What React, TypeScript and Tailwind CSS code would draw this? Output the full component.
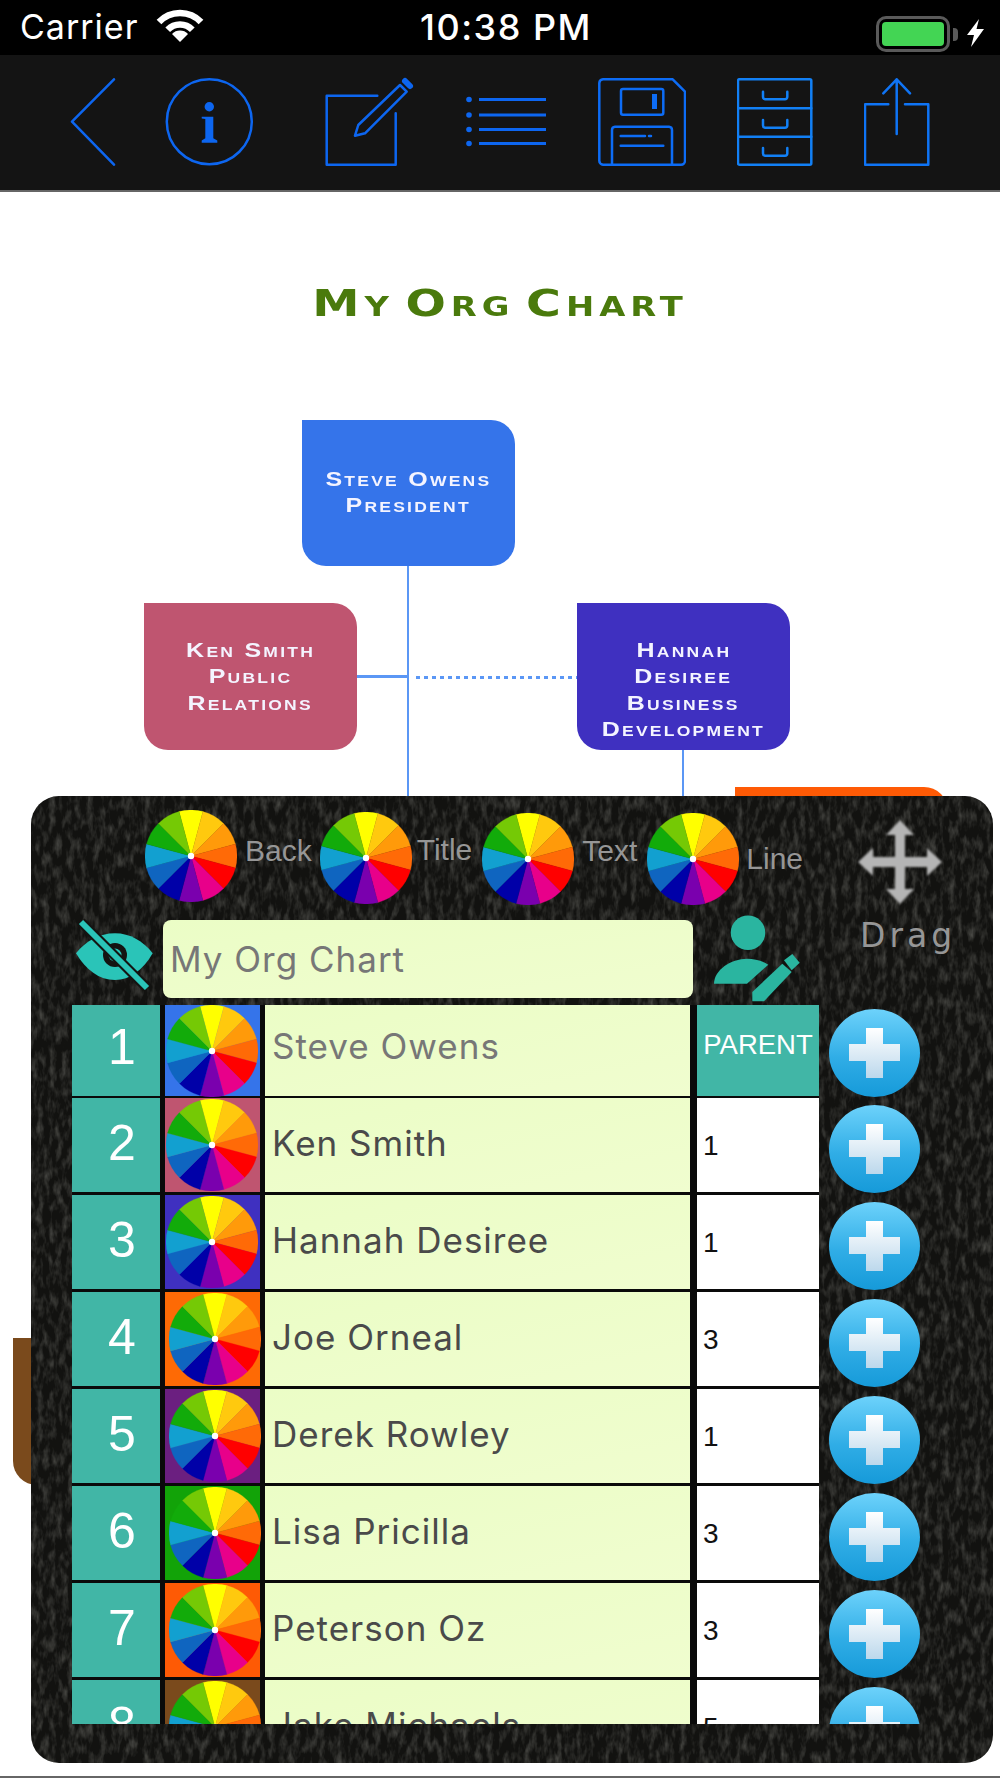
import React from 'react';

const WHEEL_COLORS = [
  '#ffff00', '#ffc90e', '#ff9a0a', '#ff6a07', '#ff0000', '#e8008a',
  '#7a00ae', '#0000a8', '#0f65c0', '#12a0d0', '#12ab0a', '#75c905',
];

const BLUE = '#0d66f0';

const Wheel = ({ className = '' }: { className?: string }) => (
  <svg viewBox="-46 -46 92 92" className={`w-[92px] h-[92px] shrink-0 ${className}`}>
    {WHEEL_COLORS.map((color, i) => {
      const a0 = ((i * 30 - 105) * Math.PI) / 180;
      const a1 = ((i * 30 - 75) * Math.PI) / 180;
      return (
        <path
          key={color}
          d={`M0 0L${46 * Math.cos(a0)} ${46 * Math.sin(a0)}A46 46 0 0 1 ${46 * Math.cos(a1)} ${46 * Math.sin(a1)}Z`}
          fill={color}
          stroke={color}
          strokeWidth="0.3"
        />
      );
    })}
    <circle r="3.2" fill="#fff" />
  </svg>
);

const PlusButton = () => (
  <svg viewBox="0 0 91 88" className="w-[91px] h-[88px]">
    <defs>
      <linearGradient id="plusBg" x1="0" y1="0" x2="0" y2="1">
        <stop offset="0" stopColor="#6dd2fb" />
        <stop offset="0.55" stopColor="#30ade6" />
        <stop offset="1" stopColor="#169ad9" />
      </linearGradient>
      <linearGradient id="plusCross" x1="0" y1="0" x2="0" y2="1">
        <stop offset="0" stopColor="#ffffff" />
        <stop offset="1" stopColor="#bcd8ec" />
      </linearGradient>
    </defs>
    <ellipse cx="45.5" cy="44" rx="45.5" ry="44" fill="url(#plusBg)" />
    <path d="M37 19h17v16h17v17H54v17H37V52H20V35h17z" fill="url(#plusCross)" />
  </svg>
);

const rows = [
  { n: 1, name: 'Steve Owens', parent: 'PARENT', bg: 'bg-[#3574ea]' },
  { n: 2, name: 'Ken Smith', parent: '1', bg: 'bg-[#bf5570]' },
  { n: 3, name: 'Hannah Desiree', parent: '1', bg: 'bg-[#3f30c0]' },
  { n: 4, name: 'Joe Orneal', parent: '3', bg: 'bg-[#fe6a05]' },
  { n: 5, name: 'Derek Rowley', parent: '1', bg: 'bg-[#6b1f80]' },
  { n: 6, name: 'Lisa Pricilla', parent: '3', bg: 'bg-[#12a308]' },
  { n: 7, name: 'Peterson Oz', parent: '3', bg: 'bg-[#fe5a05]' },
  { n: 8, name: 'Jake Michaels', parent: '5', bg: 'bg-[#7a4a1c]' },
];

const Row = ({ n, name, parent, bg }: (typeof rows)[number]) => {
  const first = n === 1;
  return (
    <div className={`flex shrink-0 ${first ? 'h-[93px]' : 'h-[97px]'}`}>
      <div className={`flex gap-[5px] bg-[#0a0a0a] w-[747px] ${first ? 'pb-[2px]' : 'pb-[3px]'}`}>
        <div className="w-[88px] bg-[#41b6a6] flex justify-center pl-[12px]">
          <span className={`font-['Liberation_Sans',sans-serif] text-[50px] leading-[50px] text-white ${first ? 'mt-[17px]' : 'mt-[20px]'}`}>{n}</span>
        </div>
        <div className={`w-[95px] flex items-center ${n < 4 ? 'pl-[1px]' : 'pl-[4px]'} ${bg}`}>
          <Wheel className={n < 4 ? '' : 'mt-[-1px]'} />
        </div>
        <div className="w-[425px] mr-[2px] bg-gradient-to-br from-[#ebfdc6] to-[#f0fdcf] pl-[7px] flex">
          <span className={`font-['Inter',sans-serif] text-[35px] leading-[40px] tracking-[1px] ${first ? 'text-[#777] mt-[21px]' : 'text-[#4a4a4a] mt-[25px]'}`}>{name}</span>
        </div>
        <div className={`w-[122px] flex ${first ? 'bg-[#41b6a6] justify-center' : 'bg-white pl-[6px]'}`}>
          <span className={`font-['Liberation_Sans',sans-serif] ${first ? 'text-[27.500px] text-white leading-[30px] mt-[25px]' : 'text-[28px] text-[#111] leading-[30px] mt-[33px]'}`}>{parent}</span>
        </div>
      </div>
      <div className={`ml-[10px] ${first ? 'pt-[4px]' : 'pt-[7px]'}`}>
        <PlusButton />
      </div>
    </div>
  );
};

const labelClass = "font-['Liberation_Sans',sans-serif] text-[30px] leading-[30px] text-[#969696]";

const App = () => (
  <div className="relative w-[1000px] h-[1778px] overflow-hidden bg-white flex flex-col font-['Liberation_Sans',sans-serif]">
    {/* status bar */}
    <div className="h-[55px] shrink-0 bg-black relative flex items-center text-white font-['Inter',sans-serif]">
      <span className="ml-[20px] text-[34px] leading-[40px] tracking-[1px] mt-[-1px]">Carrier</span>
      <svg viewBox="0 0 48 36" className="w-[48px] h-[36px] ml-[18px] mt-[-4px]" fill="none" stroke="#fff" strokeWidth="6.500">
        <path d="M3 14A29 29 0 0 1 45 14" />
        <path d="M11.700 21.700A17 17 0 0 1 36.300 21.700" />
        <path d="M24 34L16 26A11 11 0 0 1 32 26Z" fill="#fff" stroke="none" />
      </svg>
      <span className="absolute left-[420px] text-[36px] leading-[40px] font-medium tracking-[1.500px] mt-[-1px]">10:38 PM</span>
      <div className="absolute left-[876px] top-[16px] w-[74px] h-[36px] rounded-[10px] border-[3px] border-[#5a5a5a] p-[3px]">
        <div className="w-full h-full bg-[#43d554] rounded-[4px]" />
      </div>
      <div className="absolute left-[953px] top-[28px] w-[5px] h-[13px] bg-[#5a5a5a] rounded-r-[4px]" />
      <svg viewBox="0 0 17 28" className="absolute left-[967px] top-[19px] w-[17px] h-[28px]" fill="#fff">
        <path d="M12 0L0 16H7L4 28L17 10H9.500Z" />
      </svg>
    </div>

    {/* toolbar */}
    <div className="h-[137px] shrink-0 bg-[#141414] border-b-[2px] border-[#666] flex items-start pt-[21px]">
      <svg viewBox="0 0 46 88" className="w-[46px] h-[88px] ml-[70px] mt-[2px]" fill="none" stroke={BLUE} strokeWidth="2.500" strokeLinecap="round" strokeLinejoin="round">
        <path d="M44 1.300L2 43.700L44 86.700" />
      </svg>
      <svg viewBox="0 0 92 92" className="w-[92px] h-[92px] ml-[48px]" fill="none">
        <circle cx="45.300" cy="45.700" r="42.500" stroke={BLUE} strokeWidth="2.500" />
        <circle cx="45.300" cy="30.700" r="4.700" fill={BLUE} />
        <path d="M37.700 40.700H49.300V62.300L53.300 64.500V66.700H37.700V64.500L41.300 62.300V43L37.700 42.500Z" fill={BLUE} />
      </svg>
      <svg viewBox="0 0 92 92" className="w-[92px] h-[92px] ml-[68px]" fill="none" stroke={BLUE} strokeWidth="2.500" strokeLinecap="round" strokeLinejoin="round">
        <path d="M53.300 19.700H2.700V88.700H71.700V37.300" />
        <path d="M31 59.700L34.300 49L76 9L82.700 15.700L41 57.300Z" />
        <path d="M81 5L86 10" strokeWidth="6" />
      </svg>
      <svg viewBox="0 0 84 60" className="w-[84px] h-[60px] ml-[48px] mt-[14px]" fill="none" stroke={BLUE} strokeWidth="3">
        <path d="M15 9.500H82M15 25H82M15 39.500H82M15 53.500H82" />
        <g fill={BLUE} stroke="none">
          <circle cx="5" cy="9.500" r="2.800" />
          <circle cx="5" cy="25" r="2.800" />
          <circle cx="5" cy="39.500" r="2.800" />
          <circle cx="5" cy="53.500" r="2.800" />
        </g>
      </svg>
      <svg viewBox="0 0 88 88" className="w-[88px] h-[88px] ml-[50px] mt-[2px]" fill="none" stroke="#0d6cf5" strokeWidth="2.500" strokeLinejoin="round" strokeLinecap="round">
        <path d="M5 1.300H74.700L87 13.700V82.700A4 4 0 0 1 83 86.700H5A4 4 0 0 1 1.300 82.700V5A4 4 0 0 1 5 1.300Z" />
        <rect x="23" y="11" width="42.300" height="25.700" rx="2" />
        <path d="M56.500 16V31" strokeWidth="5" strokeLinecap="butt" />
        <path d="M14 86.700V52A3.300 3.300 0 0 1 17 48.700H71A3.300 3.300 0 0 1 74 52V86.700" />
        <path d="M22.700 58H47M51 58H53M22.700 67.700H65.300" />
      </svg>
      <svg viewBox="0 0 76 88" className="w-[76px] h-[88px] ml-[51px] mt-[2px]" fill="none" stroke="#1280f5" strokeWidth="2.500" strokeLinejoin="round" strokeLinecap="round">
        <rect x="1" y="1.300" width="73.300" height="85.400" rx="1.500" />
        <path d="M1 30.300H74.300M1 58.700H74.300" />
        <path d="M26 13.700V19A2.300 2.300 0 0 0 28 21.300H48A2.300 2.300 0 0 0 50.300 19V13.700" />
        <path d="M26 42V47.500A2.300 2.300 0 0 0 28 49.700H48A2.300 2.300 0 0 0 50.300 47.500V42" />
        <path d="M26 70V75.500A2.300 2.300 0 0 0 28 77.700H48A2.300 2.300 0 0 0 50.300 75.500V70" />
      </svg>
      <svg viewBox="0 0 66 88" className="w-[66px] h-[88px] ml-[51px] mt-[2px]" fill="none" stroke="#0f74f5" strokeWidth="2.500" strokeLinejoin="round" strokeLinecap="round">
        <path d="M24.300 26.300H1V86.700H64.300V26.300H41" />
        <path d="M32.700 56V1.300M19.300 15.300L32.700 1.300L46 15.300" />
      </svg>
    </div>

    {/* chart canvas */}
    <div className="relative flex-1">
      <h1 className="mt-[89px] text-center font-['DejaVu_Sans',sans-serif] font-bold [font-variant:small-caps] text-[38px] leading-[44px] tracking-[4px] [word-spacing:-8px] text-[#4a7a0c] scale-x-[1.25]">My Org Chart</h1>

      <div className="absolute left-[407px] top-[374px] w-[2px] h-[230px] bg-[#5b97f5]" />
      <div className="absolute left-[357px] top-[483px] w-[51px] h-[3px] bg-[#5b97f5]" />
      <div className="absolute left-[416px] top-[484px] w-[161px] h-[3px] bg-[repeating-linear-gradient(90deg,#5b97f5_0_4px,transparent_4px_8px)]" />
      <div className="absolute left-[682px] top-[558px] w-[2px] h-[46px] bg-[#5b97f5]" />

      <Node className="left-[302px] top-[228px] h-[146px] pb-[2px] bg-[#3574ea]" lines={['Steve Owens', 'President']} />
      <Node className="left-[144px] top-[411px] h-[147px] bg-[#bf5570]" lines={['Ken Smith', 'Public', 'Relations']} />
      <Node className="left-[577px] top-[411px] h-[147px] pt-[26px] bg-[#3f30c0]" lines={['Hannah', 'Desiree', 'Business', 'Development']} />
      <div className="absolute left-[735px] top-[595px] w-[213px] h-[147px] rounded-tr-[24px] bg-[#fe5a05]" />
      <div className="absolute left-[13px] top-[1146px] w-[213px] h-[147px] rounded-bl-[24px] bg-[#7a4a1c]" />
    </div>
    <div className="h-[2px] shrink-0 bg-[#666]" />

    {/* floating panel */}
    <div className="absolute left-[31px] top-[796px] w-[962px] h-[967px] rounded-[28px] bg-[#121210] overflow-hidden">
      <svg className="absolute inset-0 w-full h-full">
        <filter id="leather">
          <feTurbulence type="fractalNoise" baseFrequency="0.16 0.07" numOctaves="3" seed="4" />
          <feColorMatrix values="0 0 0 0 0.2 0 0 0 0 0.2 0 0 0 0 0.18 1 0 0 0 -0.420" />
        </filter>
        <rect width="100%" height="100%" filter="url(#leather)" />
      </svg>

      <div className="relative flex">
        <div className="w-[820px]">
          {/* colour pickers */}
          <div className="h-[117px] flex items-start">
            <Wheel className="ml-[114px] mt-[14px]" />
            <span className={`${labelClass} ml-[8px] mt-[40px]`}>Back</span>
            <Wheel className="ml-[8px] mt-[16px]" />
            <span className={`${labelClass} ml-[5px] mt-[39px]`}>Title</span>
            <Wheel className="ml-[10px] mt-[17px]" />
            <span className={`${labelClass} ml-[8px] mt-[40px]`}>Text</span>
            <Wheel className="ml-[10px] mt-[17px]" />
            <span className={`${labelClass} ml-[7px] mt-[48px]`}>Line</span>
          </div>
          {/* title row */}
          <div className="h-[92px] flex items-start">
            <svg viewBox="0 0 84 78" className="w-[84px] h-[78px] ml-[41px] mt-[3px]">
              <path d="M4 37.300C14 25 27 17.300 43 17.300C58 17.300 71 25 80.700 37.300C71 54 58 64 43 64C27 64 14 54 4 37.300Z" fill="#2ac4b8" />
              <circle cx="43" cy="39" r="12" fill="#141412" />
              <circle cx="43" cy="39" r="6.500" fill="#2ac4b8" />
              <path d="M9 6L75 72" stroke="#141412" strokeWidth="10" />
              <path d="M9 6L75 72" stroke="#2ac4b8" strokeWidth="6" />
            </svg>
            <div className="ml-[7px] mt-[7px] w-[530px] h-[78px] rounded-[8px] bg-gradient-to-br from-[#ebfdc6] to-[#f0fdcf] pl-[7px] flex items-center">
              <span className="font-['Inter',sans-serif] text-[35px] leading-[40px] tracking-[1px] text-[#777]">My Org Chart</span>
            </div>
            <svg viewBox="0 0 92 92" className="w-[92px] h-[92px] ml-[18px] mt-[-1px]" fill="#2ab5a0">
              <circle cx="37" cy="20.700" r="17.300" />
              <path d="M3 71.700C3 58 20 46.700 36 46.700C44 46.700 52 49 57.300 52.700L36 71.700Z" />
              <path d="M41.300 89.300V80L71.300 51.700L80.700 60L53 89.300Z" />
              <path d="M73 48.300L81.300 42L88.700 50.700L80.700 58.300Z" />
            </svg>
          </div>
        </div>
        {/* drag handle */}
        <div className="flex flex-col items-start pl-[7px] pt-[24px]">
          <svg viewBox="0 0 84 84" className="w-[84px] h-[84px] blur-[1.2px]" fill="#b4b4b4">
            <path d="M42 0L56 15H47V37H69V28L84 42L69 56V47H47V69H56L42 84L28 69H37V47H15V56L0 42L15 28V37H37V15H28Z" />
          </svg>
          <span className="font-['DejaVu_Sans',sans-serif] text-[33px] leading-[40px] tracking-[4px] text-[#969696] mt-[12px] ml-[2px]">Drag</span>
        </div>
      </div>

      {/* rows */}
      <div className="relative ml-[41px] h-[719px] overflow-hidden flex flex-col">
        {rows.map((row) => (
          <Row key={row.n} {...row} />
        ))}
      </div>
    </div>
  </div>
);

function Node({ className, lines }: { className: string; lines: string[] }) {
  return (
    <div className={`absolute w-[213px] rounded-[24px] rounded-tl-none flex flex-col items-center justify-center text-[#f4f4ff] font-['Liberation_Sans',sans-serif] font-bold [font-variant:small-caps] text-[20px] leading-[26.500px] tracking-[1.800px] ${className}`}>
      {lines.map((line) => (
        <span key={line} className="scale-x-[1.25]">{line}</span>
      ))}
    </div>
  );
}

export default App;
